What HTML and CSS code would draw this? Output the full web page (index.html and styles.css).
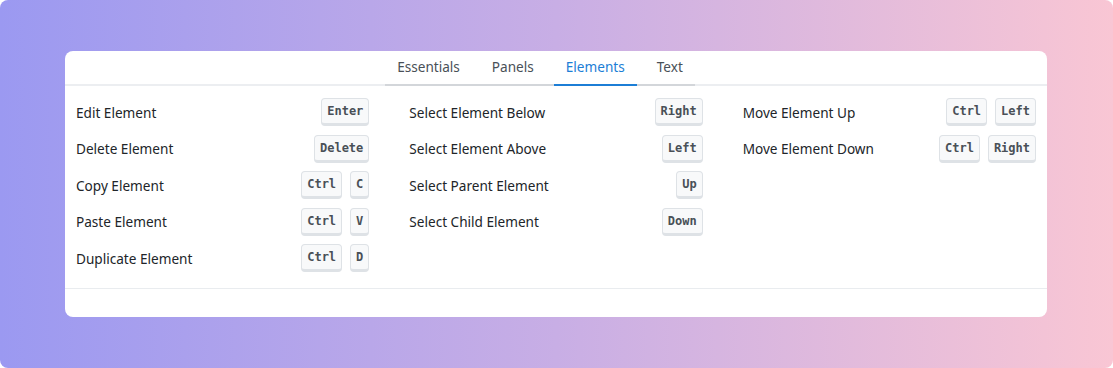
FILE: index.html
```html
<!DOCTYPE html>
<html lang="en">

<head>
    <meta charset="UTF-8">
    <meta name="viewport" content="width=device-width, initial-scale=1.0">
    <title>Shortcuts</title>
    <link rel="stylesheet" href="styles.css">
</head>

<body>
    <div class="backdrop">
        <div class="card">
            <div class="tabsBar">
                <div class="tabList">
                    <div class="tab">Essentials</div>
                    <div class="tab">Panels</div>
                    <div class="tab active">Elements</div>
                    <div class="tab">Text</div>
                </div>
            </div>

            <div class="grid">
                <div class="column">
                    <div class="row"><span>Edit Element</span><div class="keys"><kbd>Enter</kbd></div></div>
                    <div class="row"><span>Delete Element</span><div class="keys"><kbd>Delete</kbd></div></div>
                    <div class="row"><span>Copy Element</span><div class="keys"><kbd>Ctrl</kbd><kbd>C</kbd></div></div>
                    <div class="row"><span>Paste Element</span><div class="keys"><kbd>Ctrl</kbd><kbd>V</kbd></div></div>
                    <div class="row"><span>Duplicate Element</span><div class="keys"><kbd>Ctrl</kbd><kbd>D</kbd></div></div>
                </div>
                <div class="column">
                    <div class="row"><span>Select Element Below</span><div class="keys"><kbd>Right</kbd></div></div>
                    <div class="row"><span>Select Element Above</span><div class="keys"><kbd>Left</kbd></div></div>
                    <div class="row"><span>Select Parent Element</span><div class="keys"><kbd>Up</kbd></div></div>
                    <div class="row"><span>Select Child Element</span><div class="keys"><kbd>Down</kbd></div></div>
                </div>
                <div class="column">
                    <div class="row"><span>Move Element Up</span><div class="keys"><kbd>Ctrl</kbd><kbd>Left</kbd></div></div>
                    <div class="row"><span>Move Element Down</span><div class="keys"><kbd>Ctrl</kbd><kbd>Right</kbd></div></div>
                </div>
            </div>

            <div class="footer"></div>
        </div>
    </div>
</body>

</html>
```

FILE: styles.css
```css
body {
    margin: 0;
    background-color: #ffffff;
    font-family: "Noto Sans", sans-serif;
}

.backdrop {
    height: 368px;
    box-sizing: border-box;
    padding: 51px 66px 51px 65px;
    border-radius: 8px;
    background: linear-gradient(90deg, #9b99f1 0%, #c8aee5 50%, #f9c6d4 100%);
}

.card {
    background-color: #ffffff;
    border-radius: 8px;
    overflow: hidden;
}

.tabsBar {
    display: flex;
    justify-content: center;
    padding-right: 32px;
    border-bottom: 2px solid #eceef1;
}

.tabList {
    display: flex;
    gap: 8px;
    margin-bottom: -2px;
    border-bottom: 2px solid #d3d6da;
}

.tab {
    height: 33px;
    line-height: 31px;
    padding: 0 12px;
    font-size: 13.6px;
    color: #495057;
    margin-bottom: -2px;
    border-bottom: 2px solid transparent;
}

.tab.active {
    color: #1c7ed6;
    border-bottom-color: #1c7ed6;
}

.grid {
    display: grid;
    grid-template-columns: 1fr 1fr 1fr;
    column-gap: 40px;
    padding: 12px 11px 16px 11px;
    border-bottom: 1px solid #e9ecef;
    align-items: start;
}

.column {
    display: flex;
    flex-direction: column;
    gap: 8.5px;
}

.row {
    display: flex;
    justify-content: space-between;
    align-items: center;
    height: 28px;
    font-size: 13.6px;
    color: #212529;
}

.keys {
    display: flex;
    gap: 8px;
}

kbd {
    display: block;
    box-sizing: border-box;
    height: 28px;
    padding: 0 5px;
    line-height: 24px;
    font-family: "DejaVu Sans Mono", monospace;
    font-weight: 700;
    font-size: 12px;
    color: #495057;
    background-color: #f8f9fa;
    border: 1px solid #dee2e6;
    border-bottom-width: 3px;
    border-radius: 4px;
}

.footer {
    height: 28px;
}
```
